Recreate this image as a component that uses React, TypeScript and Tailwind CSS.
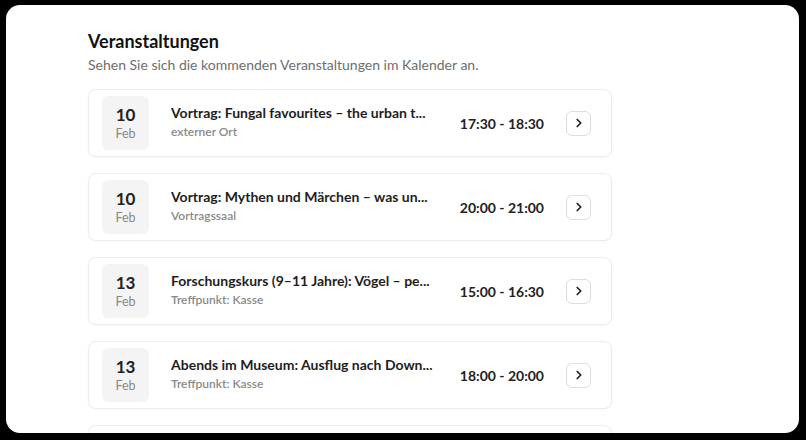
import { ChevronRight } from "lucide-react"

const events = [
  { day: "10", month: "Feb", title: "Vortrag: Fungal favourites – the urban t...", place: "externer Ort", time: "17:30 - 18:30" },
  { day: "10", month: "Feb", title: "Vortrag: Mythen und Märchen – was un...", place: "Vortragssaal", time: "20:00 - 21:00" },
  { day: "13", month: "Feb", title: "Forschungskurs (9–11 Jahre): Vögel – pe...", place: "Treffpunkt: Kasse", time: "15:00 - 16:30" },
  { day: "13", month: "Feb", title: "Abends im Museum: Ausflug nach Down...", place: "Treffpunkt: Kasse", time: "18:00 - 20:00" },
]

export default function App() {
  return (
    <div className="h-[440px] w-[806px] bg-black pt-[5px] pr-[7px] pb-[7px] pl-[6px] font-['Lato',sans-serif]">
      <div className="h-full overflow-hidden rounded-[14px] bg-white pl-[82px] pt-[24px]">
        <h1 className="text-[18px] font-bold leading-[24px] text-[#111]">Veranstaltungen</h1>
        <p className="mt-[2px] text-[14px] leading-[20px] text-[#6e6e6e]">
          Sehen Sie sich die kommenden Veranstaltungen im Kalender an.
        </p>

        <div className="mt-[14px] flex w-[524px] flex-col gap-[16px]">
          {events.map((ev, i) => (
            <div
              key={i}
              className="flex h-[68px] shrink-0 items-center rounded-[8px] border border-[#ececec] bg-white pl-[13px] shadow-[0_1px_3px_rgba(0,0,0,0.04)]"
            >
              <div className="flex h-[54px] w-[47px] shrink-0 flex-col items-center justify-center rounded-[6px] bg-[#f4f4f4]">
                <span className="text-[17px] font-bold leading-[20px] text-[#222]">{ev.day}</span>
                <span className="mt-[1px] text-[12.5px] leading-[16px] text-[#888]">{ev.month}</span>
              </div>
              <div className="ml-[22px] min-w-0 w-[268px] -mt-[2px]">
                <div className="truncate text-[14px] font-bold leading-[18px] text-[#1e1e1e]">{ev.title}</div>
                <div className="mt-[1px] truncate text-[12px] font-semibold leading-[18px] text-[#8a8a8a]">{ev.place}</div>
              </div>
              <div className="ml-auto text-[14px] font-bold text-[#222]">{ev.time}</div>
              <button className="ml-[22px] mr-[20px] flex h-[25px] w-[25px] items-center justify-center rounded-[6px] border border-[#dedede] bg-white text-[#222]">
                <ChevronRight size={14} strokeWidth={3} />
              </button>
            </div>
          ))}
          {/* next card, scrolled below the fold */}
          <div className="h-[68px] shrink-0 rounded-[8px] border border-[#ececec] bg-white shadow-[0_1px_3px_rgba(0,0,0,0.04)]" />
        </div>
      </div>
    </div>
  )
}
